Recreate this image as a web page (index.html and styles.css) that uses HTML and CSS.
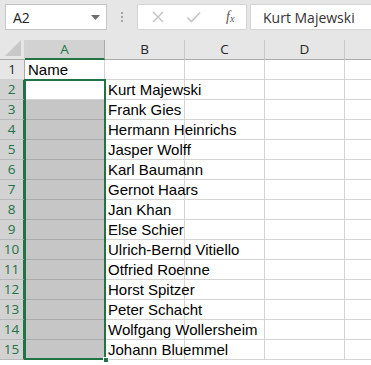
FILE: index.html
```html
<!DOCTYPE html>
<html>
<head>
<meta charset="utf-8">
<link rel="stylesheet" href="styles.css">
</head>
<body>
<div class="toolbar">
  <div class="namebox"><span>A2</span><svg class="caret" width="9" height="5" viewBox="0 0 9 5"><path d="M0 0h9L4.5 5z" fill="#6d6d6d"/></svg></div>
  <div class="dots"><i></i><i></i><i></i></div>
  <div class="fbox">
    <svg class="ico" width="14" height="14" viewBox="0 0 14 14"><path d="M2 2l10 10M12 2L2 12" stroke="#c3c3c3" stroke-width="1.4" fill="none"/></svg>
    <svg class="ico" width="16" height="14" viewBox="0 0 16 14"><path d="M1.5 7.5l4 4L14 2.5" stroke="#c3c3c3" stroke-width="1.6" fill="none"/></svg>
    <span class="fx">f<sub>x</sub></span>
  </div>
  <div class="formula">Kurt Majewski</div>
</div>
<div class="sheet">
  <div class="corner"><svg width="16" height="16" viewBox="0 0 16 16"><path d="M16 0v16H0z" fill="#c8c8c8"/></svg></div>
  <div class="colh sel">A</div>
  <div class="colh">B</div>
  <div class="colh">C</div>
  <div class="colh">D</div>
  <div class="colh last"></div>

  <div class="rowh">1</div><div class="cell">Name</div><div class="cell"></div><div class="cell"></div><div class="cell"></div><div class="cell last"></div>
  <div class="rowh sel">2</div><div class="cell active"></div><div class="cell">Kurt Majewski</div><div class="cell"></div><div class="cell"></div><div class="cell last"></div>
  <div class="rowh sel">3</div><div class="cell hl"></div><div class="cell">Frank Gies</div><div class="cell"></div><div class="cell"></div><div class="cell last"></div>
  <div class="rowh sel">4</div><div class="cell hl"></div><div class="cell">Hermann Heinrichs</div><div class="cell"></div><div class="cell"></div><div class="cell last"></div>
  <div class="rowh sel">5</div><div class="cell hl"></div><div class="cell">Jasper Wolff</div><div class="cell"></div><div class="cell"></div><div class="cell last"></div>
  <div class="rowh sel">6</div><div class="cell hl"></div><div class="cell">Karl Baumann</div><div class="cell"></div><div class="cell"></div><div class="cell last"></div>
  <div class="rowh sel">7</div><div class="cell hl"></div><div class="cell">Gernot Haars</div><div class="cell"></div><div class="cell"></div><div class="cell last"></div>
  <div class="rowh sel">8</div><div class="cell hl"></div><div class="cell">Jan Khan</div><div class="cell"></div><div class="cell"></div><div class="cell last"></div>
  <div class="rowh sel">9</div><div class="cell hl"></div><div class="cell">Else Schier</div><div class="cell"></div><div class="cell"></div><div class="cell last"></div>
  <div class="rowh sel">10</div><div class="cell hl"></div><div class="cell ov">Ulrich-Bernd Vitiello</div><div class="cell"></div><div class="cell"></div><div class="cell last"></div>
  <div class="rowh sel">11</div><div class="cell hl"></div><div class="cell">Otfried Roenne</div><div class="cell"></div><div class="cell"></div><div class="cell last"></div>
  <div class="rowh sel">12</div><div class="cell hl"></div><div class="cell">Horst Spitzer</div><div class="cell"></div><div class="cell"></div><div class="cell last"></div>
  <div class="rowh sel">13</div><div class="cell hl"></div><div class="cell">Peter Schacht</div><div class="cell"></div><div class="cell"></div><div class="cell last"></div>
  <div class="rowh sel">14</div><div class="cell hl"></div><div class="cell ov">Wolfgang Wollersheim</div><div class="cell"></div><div class="cell"></div><div class="cell last"></div>
  <div class="rowh sel">15</div><div class="cell hl"></div><div class="cell">Johann Bluemmel</div><div class="cell"></div><div class="cell"></div><div class="cell last"></div>

  <div class="selbox"><div class="handle"></div></div>
</div>
</body>
</html>
```
FILE: styles.css
```css
* { box-sizing: border-box; }
html, body { margin: 0; padding: 0; background: #fff; }
body { width: 371px; height: 365px; overflow: hidden; font-family: "Liberation Sans", Arial, sans-serif; }

.toolbar {
  height: 40px;
  background: #e6e6e6;
  display: flex;
  align-items: flex-start;
  padding: 4px 0 0 5px;
}
.namebox {
  width: 102px;
  height: 26px;
  background: #fff;
  border: 1px solid #c6c6c6;
  display: flex;
  align-items: center;
  justify-content: space-between;
  padding: 0 6px 0 7px;
  font-family: "Open Sans", sans-serif;
  font-size: 14px;
  color: #222;
}
.caret { margin-top: 1px; }
.dots {
  width: 30px;
  height: 26px;
  display: flex;
  flex-direction: column;
  align-items: center;
  justify-content: center;
  gap: 2px;
}
.dots i { display: block; width: 2px; height: 2px; background: #a6a6a6; }
.fbox {
  width: 110px;
  height: 26px;
  background: #fff;
  border: 1px solid #d4d4d4;
  display: flex;
  align-items: center;
  padding-left: 13px;
}
.fbox .ico { margin-right: 21px; }
.fbox .ico + .ico { margin-right: 24px; }
.fx {
  font-family: "Liberation Serif", serif;
  font-style: italic;
  font-size: 14px;
  color: #555;
  line-height: 1;
}
.fx sub { font-size: 10px; vertical-align: -1px; }
.formula {
  flex: 1;
  margin-left: 3px;
  height: 26px;
  background: #fff;
  border: 1px solid #d4d4d4;
  border-right: none;
  padding-left: 12px;
  display: flex;
  align-items: center;
  font-family: "Open Sans", sans-serif;
  font-size: 14px;
  color: #333;
}

.sheet {
  position: relative;
  display: grid;
  grid-template-columns: 25px 80px 80px 80px 80px 26px;
  grid-template-rows: 20px repeat(15, 20px);
  font-size: 14px;
}
.corner {
  background: #e6e6e6;
  border-right: 1px solid #d0d0d0;
  border-bottom: 1px solid #ababab;
  display: flex;
  align-items: flex-end;
  justify-content: flex-end;
  padding: 0 3px 3px 0;
}
.colh {
  background: #e6e6e6;
  border-right: 1px solid #c8c8c8;
  border-bottom: 1px solid #ababab;
  text-align: center;
  font-family: "Open Sans", sans-serif;
  font-size: 13.5px;
  line-height: 19px;
  color: #262626;
}
.colh.sel {
  background: #d2d2d2;
  color: #217346;
  border-bottom: 2px solid #217346;
  border-right-color: #ababab;
}
.colh.last { border-right: none; }
.rowh {
  background: #e6e6e6;
  border-right: 1px solid #ababab;
  border-bottom: 1px solid #d0d0d0;
  text-align: center;
  font-family: "Open Sans", sans-serif;
  font-size: 13.5px;
  line-height: 19px;
  color: #262626;
}
.rowh.sel {
  background: #d2d2d2;
  color: #217346;
  border-right: 2px solid #217346;
  border-bottom-color: #b8b8b8;
}
.cell {
  border-right: 1px solid #d4d4d4;
  border-bottom: 1px solid #d4d4d4;
  padding-left: 3px;
  line-height: 20px;
  white-space: nowrap;
  color: #000;
  font-size: 15px;
}
.cell.ov { overflow: visible; position: relative; z-index: 1; }
.cell.hl { background: #c6c6c6; border-bottom-color: #aaaaaa; border-right-color: #aaaaaa; }
.cell.last { border-right: none; }

.selbox {
  position: absolute;
  left: 24px;
  top: 39px;
  width: 82px;
  height: 281px;
  border: 2px solid #217346;
  z-index: 2;
}
.handle {
  position: absolute;
  right: -5px;
  bottom: -5px;
  width: 6px;
  height: 6px;
  background: #217346;
  border: 1px solid #fff;
}
```
